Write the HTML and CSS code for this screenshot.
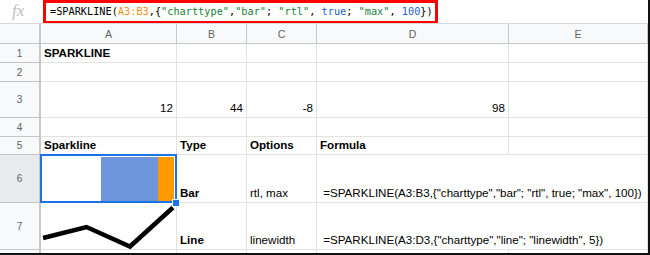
FILE: index.html
```html
<!DOCTYPE html>
<html lang="en">
<head>
<meta charset="UTF-8">
<meta name="viewport" content="width=device-width, initial-scale=1.0">
<title>SPARKLINE</title>
<link rel="stylesheet" href="styles.css">
</head>
<body>
<div class="sheet">
    <div class="formula-bar">
        <div class="fx">fx</div>
        <div class="formula-box">=SPARKLINE(<span class="ref">A3:B3</span>,{<span class="str">"charttype"</span>,<span class="str">"bar"</span>; <span class="str">"rtl"</span>, <span class="num">true</span>; <span class="str">"max"</span>, <span class="num">100</span>})</div>
    </div>
    <div class="grid">
        <div class="corner"></div>
        <div class="colhead">A</div>
        <div class="colhead">B</div>
        <div class="colhead">C</div>
        <div class="colhead">D</div>
        <div class="colhead">E</div>

        <div class="rowhead">1</div>
        <div class="cell bold">SPARKLINE</div>
        <div class="cell"></div>
        <div class="cell"></div>
        <div class="cell"></div>
        <div class="cell"></div>

        <div class="rowhead">2</div>
        <div class="cell"></div>
        <div class="cell"></div>
        <div class="cell"></div>
        <div class="cell"></div>
        <div class="cell"></div>

        <div class="rowhead">3</div>
        <div class="cell num-cell">12</div>
        <div class="cell num-cell">44</div>
        <div class="cell num-cell">-8</div>
        <div class="cell num-cell">98</div>
        <div class="cell"></div>

        <div class="rowhead">4</div>
        <div class="cell"></div>
        <div class="cell"></div>
        <div class="cell"></div>
        <div class="cell"></div>
        <div class="cell"></div>

        <div class="rowhead">5</div>
        <div class="cell bold">Sparkline</div>
        <div class="cell bold">Type</div>
        <div class="cell bold">Options</div>
        <div class="cell bold">Formula</div>
        <div class="cell"></div>

        <div class="rowhead active">6</div>
        <div class="cell spark selected">
            <div class="bars">
                <div class="bar blue" style="width: 57px"></div>
                <div class="bar orange" style="width: 16px"></div>
            </div>
            <div class="handle"></div>
        </div>
        <div class="cell bold">Bar</div>
        <div class="cell">rtl, max</div>
        <div class="cell formula"> =SPARKLINE(A3:B3,{"charttype","bar"; "rtl", true; "max", 100})</div>

        <div class="rowhead">7</div>
        <div class="cell spark">
            <svg class="line" width="135" height="46" viewBox="0 0 135 46">
                <polyline points="2,35 45.5,24 89,43.5 132,4.5" fill="none" stroke="#000" stroke-width="4.5"/>
            </svg>
        </div>
        <div class="cell bold">Line</div>
        <div class="cell">linewidth</div>
        <div class="cell formula"> =SPARKLINE(A3:D3,{"charttype","line"; "linewidth", 5})</div>

        <div class="rowhead"></div>
        <div class="cell"></div>
        <div class="cell"></div>
        <div class="cell"></div>
        <div class="cell"></div>
        <div class="cell"></div>
    </div>
</div>
</body>
</html>
```

FILE: styles.css
```css
body {
    margin: 0;
    padding: 0;
    background-color: #fff;
    font-family: "Liberation Sans", Arial, sans-serif;
}
.sheet {
    width: 650px;
    height: 255px;
    box-sizing: border-box;
    border-right: 2px solid #111;
    border-bottom: 2px solid #111;
    display: flex;
    flex-direction: column;
    overflow: hidden;
}
.formula-bar {
    height: 23px;
    display: flex;
    flex-shrink: 0;
}
.fx {
    width: 40px;
    padding-left: 12px;
    box-sizing: border-box;
    font-family: "Liberation Serif", serif;
    font-style: italic;
    font-size: 17px;
    line-height: 22px;
    color: #bdbdbd;
}
.formula-box {
    margin-left: 3px;
    width: 395px;
    height: 24px;
    box-sizing: border-box;
    border: 3px solid #f00;
    padding-left: 4px;
    font-family: "DejaVu Sans Mono", monospace;
    font-size: 10.25px;
    line-height: 17px;
    color: #000;
    white-space: pre;
}
.ref {
    color: #ef9210;
}
.str {
    color: #16833a;
}
.num {
    color: #1d5ed4;
}
.grid {
    flex: 1;
    display: grid;
    grid-template-columns: 41px 136px 70px 70px 192px 1fr;
    grid-template-rows: 21px 19px 19px 36px 19px 18px 48px 47px 1fr;
}
.corner,
.colhead {
    background-color: #f8f9fa;
    border-right: 1px solid #c7c7c7;
    border-bottom: 1px solid #c4c4c4;
    border-top: 1px solid #dadada;
}
.corner {
    border-right: 2px solid #c7c7c7;
}
.colhead {
    display: flex;
    align-items: center;
    justify-content: center;
    font-size: 10.5px;
    color: #5f6368;
}
.rowhead {
    background-color: #f8f9fa;
    border-right: 2px solid #c7c7c7;
    border-bottom: 1px solid #c4c4c4;
    display: flex;
    align-items: center;
    justify-content: center;
    font-size: 10px;
    color: #5f6368;
}
.rowhead.active {
    background-color: #e8eaed;
}
.cell {
    border-right: 1px solid #e2e2e2;
    border-bottom: 1px solid #e2e2e2;
    padding: 0 3px 3px 3px;
    display: flex;
    align-items: flex-end;
    font-size: 11.6px;
    line-height: 13px;
    color: #000;
    white-space: pre;
    overflow: hidden;
}
.formula {
    grid-column: span 2;
}
.bold {
    font-weight: bold;
}
.num-cell {
    justify-content: flex-end;
}
.spark {
    position: relative;
    padding: 0;
    overflow: visible;
}
.selected::after {
    content: "";
    position: absolute;
    left: -1px;
    top: -1px;
    right: -1px;
    bottom: -1px;
    border: 2px solid #1a73e8;
    pointer-events: none;
}
.bars {
    flex: 1;
    align-self: stretch;
    display: flex;
    justify-content: flex-end;
    padding: 2px 2px 1px 2px;
}
.bar.blue {
    background-color: #6d96dd;
}
.bar.orange {
    background-color: #ff9900;
}
.handle {
    position: absolute;
    right: -4px;
    bottom: -5px;
    width: 6px;
    height: 6px;
    background-color: #1a73e8;
    border: 1px solid #fff;
    z-index: 2;
}
.line {
    position: absolute;
    left: 0;
    top: 0;
    overflow: visible;
}
```
